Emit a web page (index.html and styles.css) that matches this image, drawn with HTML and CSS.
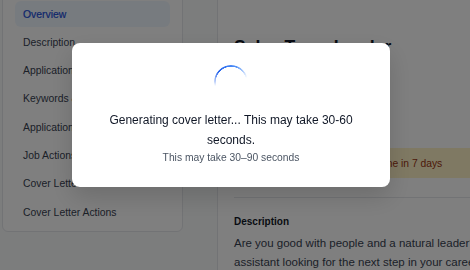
FILE: index.html
```html
<!DOCTYPE html>
<html lang="en">
<head>
<meta charset="utf-8">
<title>Job details</title>
<link rel="stylesheet" href="styles.css">
</head>
<body>
<div class="page">
  <nav class="sidebar">
    <a class="nav-item active">Overview</a>
    <a class="nav-item">Description</a>
    <a class="nav-item">Application Details</a>
    <a class="nav-item">Keywords &amp; Skills</a>
    <a class="nav-item">Application Status</a>
    <a class="nav-item">Job Actions</a>
    <a class="nav-item">Cover Letter</a>
    <a class="nav-item">Cover Letter Actions</a>
  </nav>
  <main class="main">
    <h1 class="title">Sales Team Leader</h1>
    <p class="meta">Retail Co · Manchester</p>
    <p class="meta">Full-time · Posted 3 days ago</p>
    <div class="banner">Application deadline in 7 days</div>
    <hr class="divider">
    <h2 class="section-title">Description</h2>
    <p class="body-text">Are you good with people and a natural leader? Are you a retail sales<br>assistant looking for the next step in your career? Join our team today.</p>
  </main>
</div>

<div class="overlay">
  <div class="modal">
    <div class="spinner"></div>
    <p class="modal-title">Generating cover letter... This may take 30-60 seconds.</p>
    <p class="modal-sub">This may take 30–90 seconds</p>
  </div>
</div>
</body>
</html>
```

FILE: styles.css
```css
* { box-sizing: border-box; }

html, body {
  margin: 0;
  height: 100%;
  overflow: hidden;
}

body {
  background: #f9fafb;
  font-family: "Liberation Sans", Arial, Helvetica, sans-serif;
  color: #111827;
}

.page {
  display: flex;
  align-items: flex-start;
  gap: 34px;
  margin-top: -12px;
  padding-left: 2px;
}

.sidebar {
  flex: 0 0 181px;
  display: flex;
  flex-direction: column;
  gap: 2.3px;
  background: #ffffff;
  border: 1px solid #e5e7eb;
  border-radius: 6px;
  padding: 12px 12px 6px;
}

.nav-item {
  display: flex;
  align-items: center;
  height: 26px;
  padding: 0 8px;
  border-radius: 6px;
  font-size: 10.4px;
  color: #374151;
  white-space: nowrap;
}

.nav-item.active {
  background: #eff6ff;
  color: #1d4ed8;
  -webkit-text-stroke: 0.2px #1d4ed8;
}

.main {
  flex: 0 0 420px;
  background: #ffffff;
  border: 1px solid #e5e7eb;
  border-radius: 6px;
  padding: 44px 16px 20px;
}

.title {
  margin: 0;
  font-size: 17.5px;
  line-height: 28px;
  font-weight: 700;
  color: #111827;
}

.meta {
  margin: 6px 0 0;
  font-size: 11px;
  line-height: 16px;
  color: #6b7280;
}

.banner {
  margin-top: 43px;
  height: 30px;
  display: flex;
  align-items: center;
  padding: 0 12px 0 72px;
  background: #fef3c7;
  border-radius: 4px;
  font-size: 10.3px;
  color: #9a3412;
}

.divider {
  margin: 19px 0 0;
  border: 0;
  border-top: 1px solid #e5e7eb;
}

.section-title {
  margin: 16px 0 0;
  font-size: 10px;
  line-height: 16px;
  font-weight: 700;
  color: #111827;
}

.body-text {
  margin: 4px 0 0;
  font-size: 11.5px;
  line-height: 19px;
  color: #374151;
  white-space: nowrap;
}

.overlay {
  position: fixed;
  inset: 0;
  z-index: 10;
  background: rgba(0, 0, 0, 0.5);
  display: flex;
  align-items: flex-start;
  padding: 43px 0 0 72px;
}

.modal {
  width: 318px;
  height: 144px;
  background: #ffffff;
  border-radius: 8px;
  padding: 22px 28px 0;
  text-align: center;
  box-shadow: 0 10px 25px rgba(0, 0, 0, 0.15);
}

.spinner {
  width: 34px;
  height: 34px;
  margin: 0 auto;
  border-radius: 50%;
  background: conic-gradient(from 255deg, rgba(37, 99, 235, 0) 0deg, rgba(37, 99, 235, 1) 55deg, rgba(59, 130, 246, 0.9) 120deg, rgba(59, 130, 246, 0) 180deg, rgba(59, 130, 246, 0) 360deg);
  -webkit-mask: radial-gradient(farthest-side, transparent calc(100% - 2px), #000 calc(100% - 1.5px));
  mask: radial-gradient(farthest-side, transparent calc(100% - 2px), #000 calc(100% - 1.5px));
}

.modal-title {
  margin: 11px 0 0;
  font-size: 12px;
  line-height: 20px;
  font-weight: 400;
  color: #111827;
}

.modal-sub {
  margin: 0;
  font-size: 10.3px;
  line-height: 16px;
  color: #4b5563;
}
```
